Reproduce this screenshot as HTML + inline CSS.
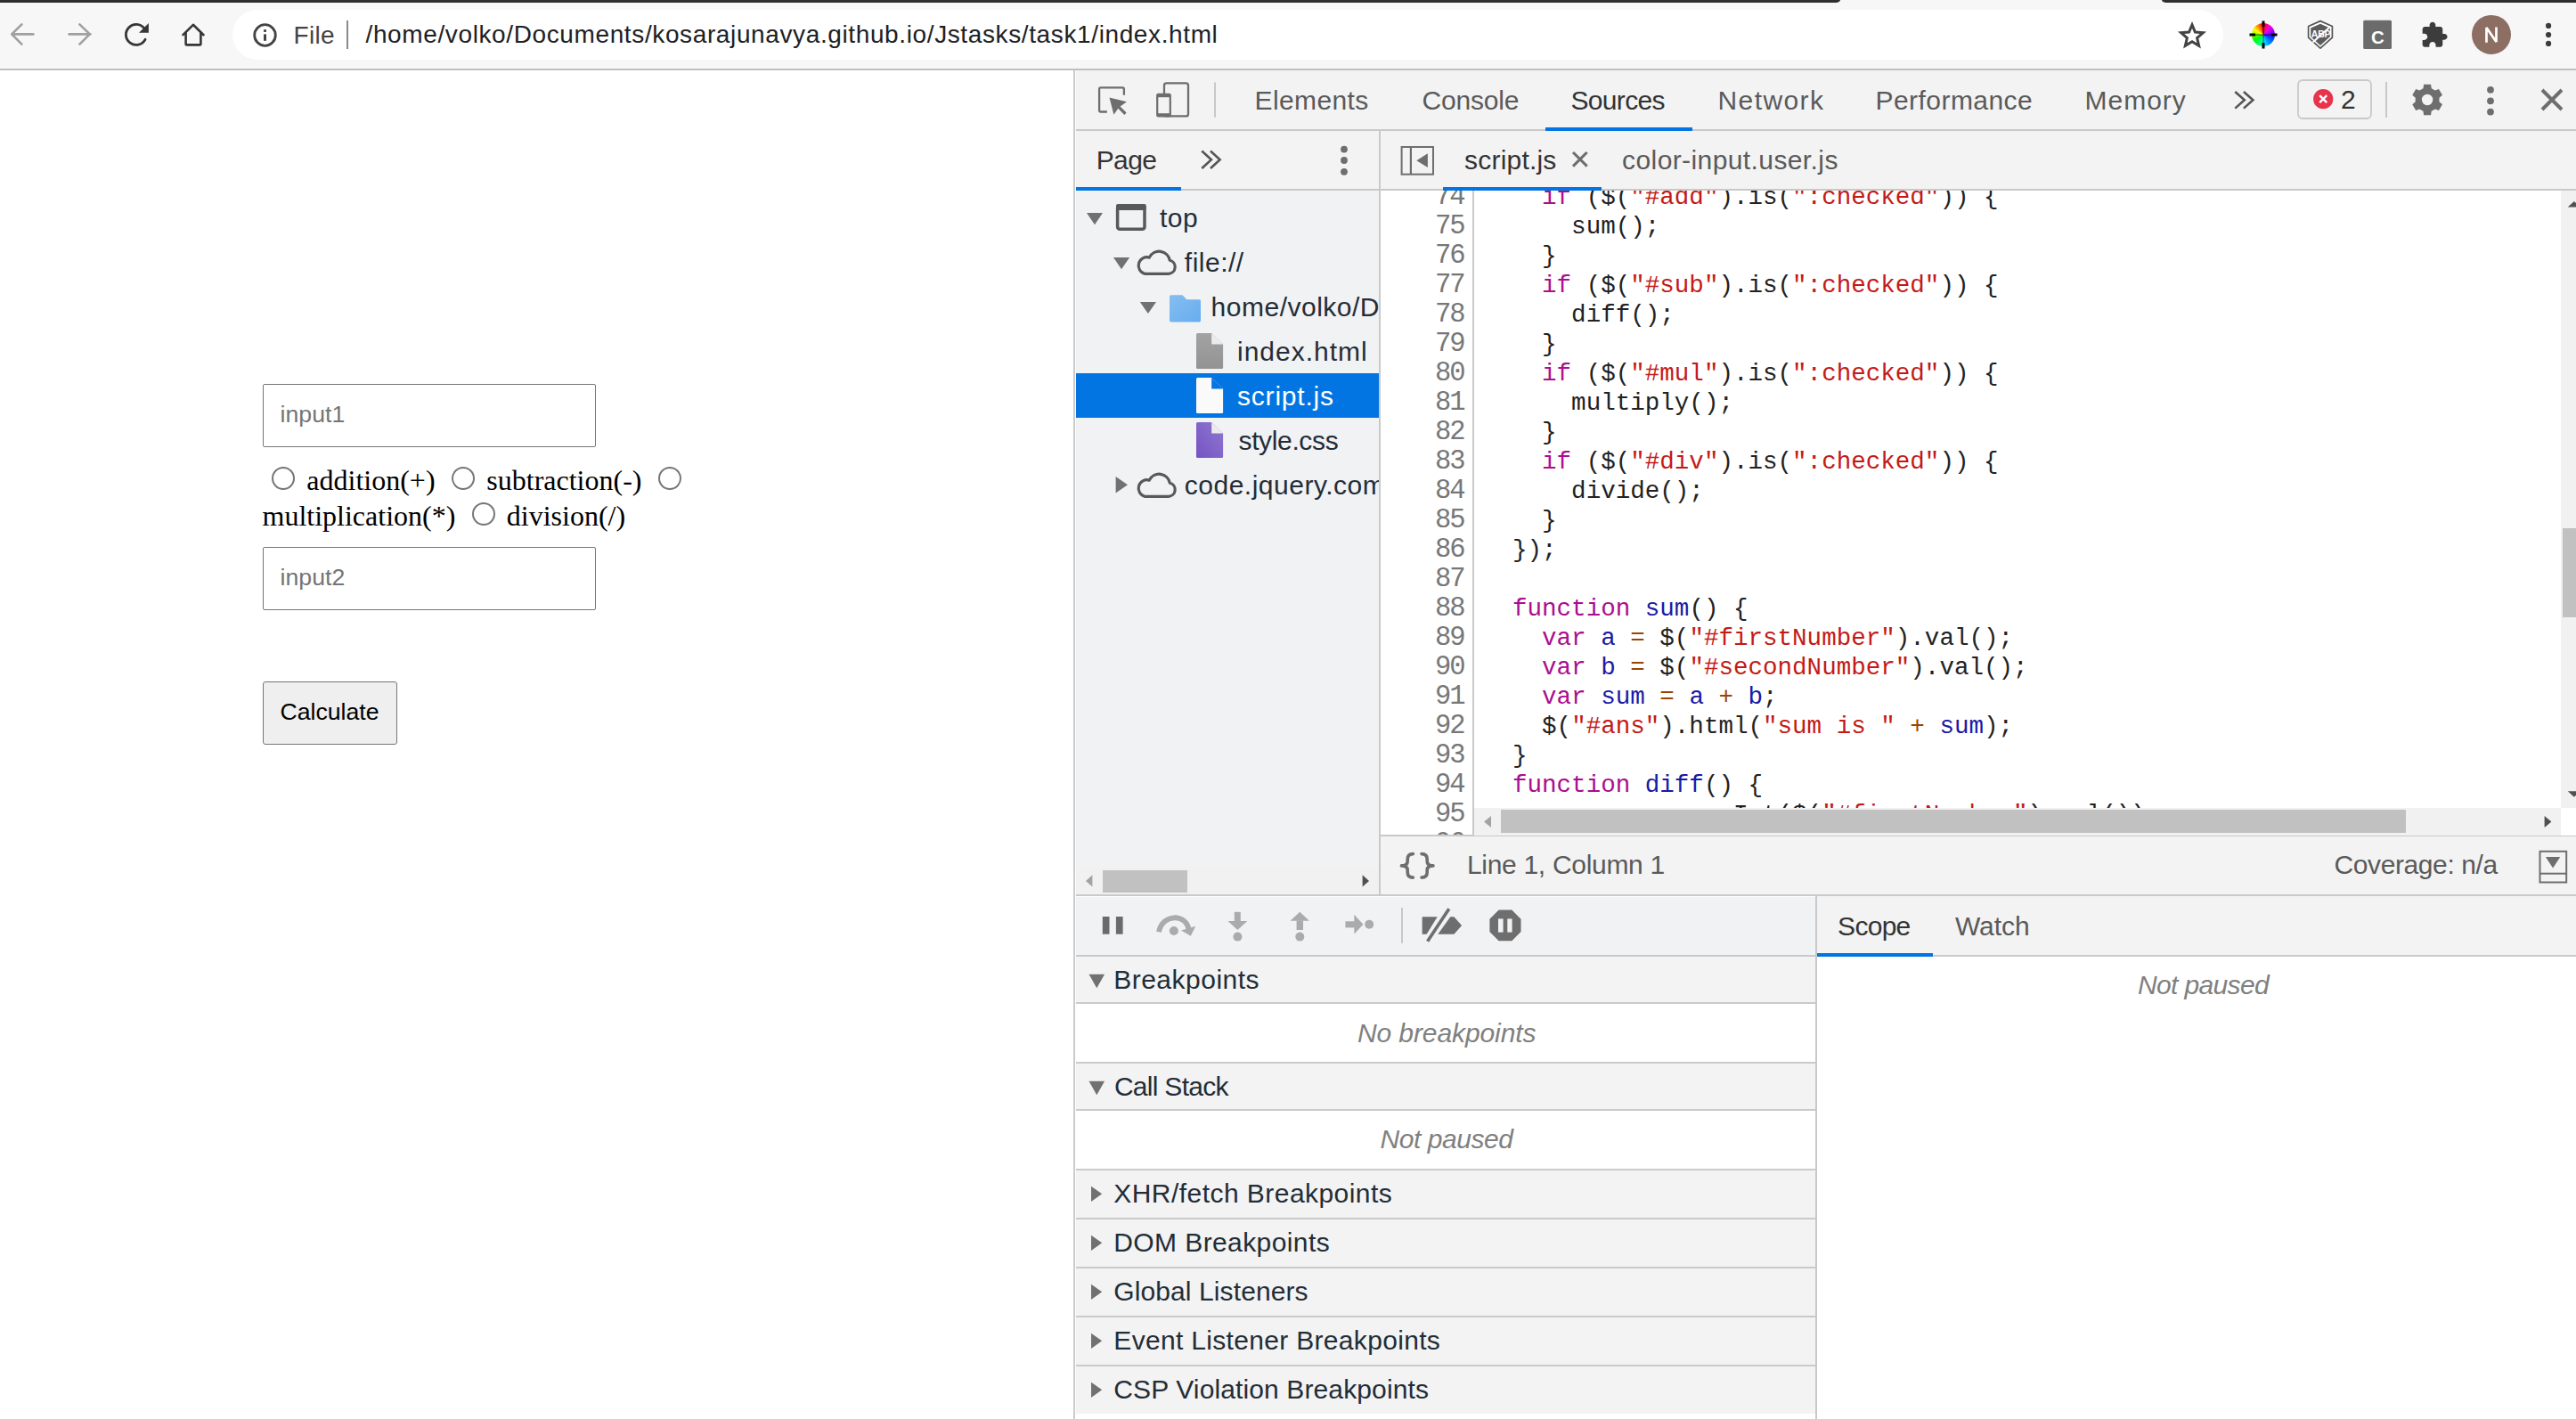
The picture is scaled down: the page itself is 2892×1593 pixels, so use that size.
<!DOCTYPE html>
<html><head><meta charset="utf-8">
<style>
html,body{margin:0;padding:0;}
body{width:2892px;height:1593px;position:relative;overflow:hidden;background:#fff;font-family:"Liberation Sans",sans-serif;}
.a{position:absolute;}
.t{position:absolute;white-space:pre;line-height:1;}
svg{position:absolute;overflow:visible;}
.code{position:absolute;font-family:"Liberation Mono",monospace;font-size:27.55px;line-height:33px;white-space:pre;color:#222;}
.kw{color:#aa0d91}.st{color:#c41a16}.df{color:#1a1aa6}.op{color:#994500}
.ln{position:absolute;font-family:"Liberation Mono",monospace;font-size:30.5px;letter-spacing:-1.85px;line-height:33px;white-space:pre;color:#777;text-align:right;}
</style></head>
<body>

<div class="a" style="left:2060px;top:0px;width:372px;height:3px;background:#f7f7f7;"></div>
<div class="a" style="left:0px;top:0px;width:2066px;height:3px;background:#2e2e2e;border-bottom-right-radius:5px 3px"></div>
<div class="a" style="left:2427px;top:0px;width:465px;height:3px;background:#2e2e2e;border-bottom-left-radius:5px 3px"></div>
<div class="a" style="left:0px;top:3px;width:2892px;height:74px;background:#f7f7f7;"></div>
<div class="a" style="left:0px;top:77px;width:2892px;height:2px;background:#bfbfbf;"></div>
<div class="a" style="left:261px;top:11px;width:2235px;height:56px;background:#fff;border-radius:28px"></div>
<div class="a" style="left:1205px;top:79px;width:2px;height:1514px;background:#cbcbcb;"></div>
<div class="a" style="left:1207px;top:79px;width:1685px;height:66px;background:#f3f3f3;"></div>
<div class="a" style="left:1207px;top:145px;width:1685px;height:2px;background:#c9c9c9;"></div>
<div class="a" style="left:1207px;top:147px;width:341px;height:65px;background:#f3f3f3;"></div>
<div class="a" style="left:1207px;top:214px;width:341px;height:790px;background:#f1f2f4;"></div>
<div class="a" style="left:1550px;top:147px;width:1342px;height:65px;background:#f3f3f3;"></div>
<div class="a" style="left:1207px;top:212px;width:1685px;height:2px;background:#c9c9c9;"></div>
<div class="a" style="left:1548px;top:147px;width:2px;height:857px;background:#c9c9c9;"></div>
<div class="a" style="left:1550px;top:214px;width:1342px;height:724px;background:#fff;"></div>
<div class="a" style="left:1653px;top:214px;width:2px;height:724px;background:#c9c9c9;"></div>
<div class="a" style="left:1550px;top:937px;width:1342px;height:2px;background:#c9c9c9;"></div>
<div class="a" style="left:1550px;top:939px;width:1342px;height:65px;background:#f3f3f3;"></div>
<div class="a" style="left:1207px;top:1004px;width:1685px;height:2px;background:#c9c9c9;"></div>
<div class="a" style="left:1207px;top:1006px;width:831px;height:1px;background:#fff;"></div>
<div class="a" style="left:1207px;top:1007px;width:831px;height:65px;background:#f1f2f4;"></div>
<div class="a" style="left:1207px;top:1072px;width:831px;height:2px;background:#c9c9c9;"></div>
<div class="a" style="left:2038px;top:1006px;width:2px;height:587px;background:#c9c9c9;"></div>
<div class="a" style="left:2040px;top:1006px;width:852px;height:66px;background:#f3f3f3;"></div>
<div class="a" style="left:2040px;top:1072px;width:852px;height:2px;background:#c9c9c9;"></div>
<div class="a" style="left:1207px;top:1074px;width:831px;height:51px;background:#f3f3f3;"></div>
<div class="a" style="left:1207px;top:1125px;width:831px;height:2px;background:#cacaca;"></div>
<div class="a" style="left:1207px;top:1192px;width:831px;height:2px;background:#cacaca;"></div>
<div class="a" style="left:1207px;top:1194px;width:831px;height:51px;background:#f3f3f3;"></div>
<div class="a" style="left:1207px;top:1245px;width:831px;height:2px;background:#cacaca;"></div>
<div class="a" style="left:1207px;top:1312px;width:831px;height:2px;background:#cacaca;"></div>
<div class="a" style="left:1207px;top:1314px;width:831px;height:53px;background:#f3f3f3;"></div>
<div class="a" style="left:1207px;top:1367px;width:831px;height:2px;background:#cacaca;"></div>
<div class="a" style="left:1207px;top:1369px;width:831px;height:53px;background:#f3f3f3;"></div>
<div class="a" style="left:1207px;top:1422px;width:831px;height:2px;background:#cacaca;"></div>
<div class="a" style="left:1207px;top:1424px;width:831px;height:53px;background:#f3f3f3;"></div>
<div class="a" style="left:1207px;top:1477px;width:831px;height:2px;background:#cacaca;"></div>
<div class="a" style="left:1207px;top:1479px;width:831px;height:53px;background:#f3f3f3;"></div>
<div class="a" style="left:1207px;top:1532px;width:831px;height:2px;background:#cacaca;"></div>
<div class="a" style="left:1207px;top:1534px;width:831px;height:53px;background:#f3f3f3;"></div>
<div class="a" style="left:1735px;top:143px;width:165px;height:4px;background:#0375e2;"></div>
<div class="a" style="left:1207px;top:210px;width:119px;height:4px;background:#0375e2;"></div>
<div class="a" style="left:1620px;top:210px;width:178px;height:4px;background:#0375e2;"></div>
<div class="a" style="left:2040px;top:1070px;width:130px;height:4px;background:#0375e2;"></div>
<div class="a" style="left:1207px;top:419px;width:341px;height:50px;background:#0375e2;"></div>
<div class="t" style="left:329.5px;top:25.7px;font-family:'Liberation Sans',sans-serif;font-size:28px;color:#444;letter-spacing:0.3px;">File</div>
<div class="t" style="left:410.5px;top:25.3px;font-family:'Liberation Sans',sans-serif;font-size:28px;color:#202124;letter-spacing:0.62px;">/home/volko/Documents/kosarajunavya.github.io/Jstasks/task1/index.html</div>
<div class="t" style="left:1408.5px;top:97.6px;font-family:'Liberation Sans',sans-serif;font-size:30px;color:#5a5a5a;letter-spacing:0.4px;">Elements</div>
<div class="t" style="left:1596.5px;top:97.6px;font-family:'Liberation Sans',sans-serif;font-size:30px;color:#5a5a5a;letter-spacing:-0.18px;">Console</div>
<div class="t" style="left:1763.5px;top:97.6px;font-family:'Liberation Sans',sans-serif;font-size:30px;color:#333;letter-spacing:-0.67px;">Sources</div>
<div class="t" style="left:1928.5px;top:97.6px;font-family:'Liberation Sans',sans-serif;font-size:30px;color:#5a5a5a;letter-spacing:1.4px;">Network</div>
<div class="t" style="left:2105.5px;top:97.6px;font-family:'Liberation Sans',sans-serif;font-size:30px;color:#5a5a5a;letter-spacing:0.45px;">Performance</div>
<div class="t" style="left:2340.5px;top:97.6px;font-family:'Liberation Sans',sans-serif;font-size:30px;color:#5a5a5a;letter-spacing:1.0px;">Memory</div>
<div class="t" style="left:2628.1px;top:96.6px;font-family:'Liberation Sans',sans-serif;font-size:30px;color:#333;">2</div>
<div class="t" style="left:1230.7px;top:165.1px;font-family:'Liberation Sans',sans-serif;font-size:30px;color:#333;letter-spacing:-0.6px;">Page</div>
<div class="t" style="left:1644.1px;top:165.1px;font-family:'Liberation Sans',sans-serif;font-size:30px;color:#333;letter-spacing:0.19px;">script.js</div>
<div class="t" style="left:1821.1px;top:165.1px;font-family:'Liberation Sans',sans-serif;font-size:30px;color:#5a5a5a;letter-spacing:0.4px;">color-input.user.js</div>
<div class="a" style="left:1207px;top:214px;width:341px;height:759px;overflow:hidden"><div class="a" style="left:-1207px;top:-214px;width:2892px;height:1593px">
<div class="t" style="left:1301.9px;top:230.2px;font-family:'Liberation Sans',sans-serif;font-size:30px;color:#232d37;letter-spacing:0.5px;">top</div>
<div class="t" style="left:1329.8px;top:280.2px;font-family:'Liberation Sans',sans-serif;font-size:30px;color:#232d37;letter-spacing:0.5px;">file://</div>
<div class="t" style="left:1359.6px;top:330.2px;font-family:'Liberation Sans',sans-serif;font-size:30px;color:#232d37;letter-spacing:0.5px;">home/volko/Documents</div>
<div class="t" style="left:1389.0px;top:380.2px;font-family:'Liberation Sans',sans-serif;font-size:30px;color:#232d37;letter-spacing:1.0px;">index.html</div>
<div class="t" style="left:1389.0px;top:430.2px;font-family:'Liberation Sans',sans-serif;font-size:30px;color:#fff;letter-spacing:0.8px;">script.js</div>
<div class="t" style="left:1390.5px;top:480.2px;font-family:'Liberation Sans',sans-serif;font-size:30px;color:#232d37;letter-spacing:-0.36px;">style.css</div>
<div class="t" style="left:1329.8px;top:530.2px;font-family:'Liberation Sans',sans-serif;font-size:30px;color:#232d37;letter-spacing:0.5px;">code.jquery.com</div>
</div></div>
<div class="t" style="left:1646.9px;top:956.1px;font-family:'Liberation Sans',sans-serif;font-size:30px;color:#5a5a5a;letter-spacing:-0.3px;">Line 1, Column 1</div>
<div class="t" style="left:2620.5px;top:956.4px;font-family:'Liberation Sans',sans-serif;font-size:30px;color:#5a5a5a;letter-spacing:-0.4px;">Coverage: n/a</div>
<div class="t" style="left:1250.2px;top:1085.3px;font-family:'Liberation Sans',sans-serif;font-size:30px;color:#232d37;letter-spacing:0.5px;">Breakpoints</div>
<div class="t" style="left:1523.9px;top:1144.6px;font-family:'Liberation Sans',sans-serif;font-size:30px;color:#808080;letter-spacing:-0.09px;font-style:italic;">No breakpoints</div>
<div class="t" style="left:1250.9px;top:1205.1px;font-family:'Liberation Sans',sans-serif;font-size:30px;color:#232d37;letter-spacing:-0.71px;">Call Stack</div>
<div class="t" style="left:1549.5px;top:1263.6px;font-family:'Liberation Sans',sans-serif;font-size:30px;color:#808080;letter-spacing:-0.45px;font-style:italic;">Not paused</div>
<div class="t" style="left:1250.3px;top:1325.3px;font-family:'Liberation Sans',sans-serif;font-size:30px;color:#232d37;letter-spacing:0.45px;">XHR/fetch Breakpoints</div>
<div class="t" style="left:1250.3px;top:1380.3px;font-family:'Liberation Sans',sans-serif;font-size:30px;color:#232d37;letter-spacing:0.4px;">DOM Breakpoints</div>
<div class="t" style="left:1250.3px;top:1435.3px;font-family:'Liberation Sans',sans-serif;font-size:30px;color:#232d37;letter-spacing:0.1px;">Global Listeners</div>
<div class="t" style="left:1250.3px;top:1490.3px;font-family:'Liberation Sans',sans-serif;font-size:30px;color:#232d37;letter-spacing:0.32px;">Event Listener Breakpoints</div>
<div class="t" style="left:1250.3px;top:1545.0px;font-family:'Liberation Sans',sans-serif;font-size:30px;color:#232d37;letter-spacing:0.12px;">CSP Violation Breakpoints</div>
<div class="t" style="left:2063.1px;top:1024.6px;font-family:'Liberation Sans',sans-serif;font-size:30px;color:#333;letter-spacing:-0.72px;">Scope</div>
<div class="t" style="left:2194.9px;top:1024.6px;font-family:'Liberation Sans',sans-serif;font-size:30px;color:#5a5a5a;">Watch</div>
<div class="t" style="left:2399.9px;top:1091.1px;font-family:'Liberation Sans',sans-serif;font-size:30px;color:#808080;letter-spacing:-0.63px;font-style:italic;">Not paused</div>
<div class="a" style="left:295px;top:431px;width:374px;height:71px;background:#fff;box-sizing:border-box;border:1px solid #767676;border-radius:2px"></div>
<div class="t" style="left:314.6px;top:452.1px;font-family:'Liberation Sans',sans-serif;font-size:26.67px;color:#757575;">input1</div>
<div class="a" style="left:295px;top:614px;width:374px;height:71px;background:#fff;box-sizing:border-box;border:1px solid #767676;border-radius:2px"></div>
<div class="t" style="left:314.6px;top:635.1px;font-family:'Liberation Sans',sans-serif;font-size:26.67px;color:#757575;">input2</div>
<div class="a" style="left:305px;top:524px;width:26px;height:26px;box-sizing:border-box;border:2px solid #767676;border-radius:50%;background:#fff"></div>
<div class="a" style="left:507px;top:524px;width:26px;height:26px;box-sizing:border-box;border:2px solid #767676;border-radius:50%;background:#fff"></div>
<div class="a" style="left:738.5px;top:524px;width:26px;height:26px;box-sizing:border-box;border:2px solid #767676;border-radius:50%;background:#fff"></div>
<div class="a" style="left:530px;top:564px;width:26px;height:26px;box-sizing:border-box;border:2px solid #767676;border-radius:50%;background:#fff"></div>
<div class="t" style="left:344.3px;top:523.2px;font-family:'Liberation Serif',serif;font-size:32px;color:#000;">addition(+)</div>
<div class="t" style="left:546.3px;top:523.2px;font-family:'Liberation Serif',serif;font-size:32px;color:#000;">subtraction(-)</div>
<div class="t" style="left:294.5px;top:563.2px;font-family:'Liberation Serif',serif;font-size:32px;color:#000;">multiplication(*)</div>
<div class="t" style="left:568.8px;top:563.2px;font-family:'Liberation Serif',serif;font-size:32px;color:#000;">division(/)</div>
<div class="a" style="left:295px;top:765px;width:151px;height:71px;background:#efefef;box-sizing:border-box;border:1px solid #767676;border-radius:3px"></div>
<div class="t" style="left:314.4px;top:785.9px;font-family:'Liberation Sans',sans-serif;font-size:26.67px;color:#000;">Calculate</div>
<div class="a" style="left:1550px;top:214px;width:1325px;height:723px;overflow:hidden">
<div class="code" style="left:148px;top:-9.2px">  <span class="kw">if</span> ($(<span class="st">&quot;#add&quot;</span>).is(<span class="st">&quot;:checked&quot;</span>)) {
    sum();
  }
  <span class="kw">if</span> ($(<span class="st">&quot;#sub&quot;</span>).is(<span class="st">&quot;:checked&quot;</span>)) {
    diff();
  }
  <span class="kw">if</span> ($(<span class="st">&quot;#mul&quot;</span>).is(<span class="st">&quot;:checked&quot;</span>)) {
    multiply();
  }
  <span class="kw">if</span> ($(<span class="st">&quot;#div&quot;</span>).is(<span class="st">&quot;:checked&quot;</span>)) {
    divide();
  }
});

<span class="kw">function</span> <span class="df">sum</span>() {
  <span class="kw">var</span> <span class="df">a</span> <span class="op">=</span> $(<span class="st">&quot;#firstNumber&quot;</span>).val();
  <span class="kw">var</span> <span class="df">b</span> <span class="op">=</span> $(<span class="st">&quot;#secondNumber&quot;</span>).val();
  <span class="kw">var</span> <span class="df">sum</span> <span class="op">=</span> <span class="df">a</span> <span class="op">+</span> <span class="df">b</span>;
  $(<span class="st">&quot;#ans&quot;</span>).html(<span class="st">&quot;sum is &quot;</span> <span class="op">+</span> <span class="df">sum</span>);
}
<span class="kw">function</span> <span class="df">diff</span>() {
  <span class="kw">var</span> <span class="df">a</span> <span class="op">=</span> parseInt($(<span class="st">&quot;#firstNumber&quot;</span>).val());
  <span class="kw">var</span> <span class="df">b</span> <span class="op">=</span> parseInt($(<span class="st">&quot;#secondNumber&quot;</span>).val());</div>
</div>
<div class="a" style="left:1550px;top:214px;width:103px;height:723px;overflow:hidden"><div class="ln" style="left:0px;top:-9.2px;width:93.8px">74
75
76
77
78
79
80
81
82
83
84
85
86
87
88
89
90
91
92
93
94
95
96</div></div>
<div class="a" style="left:1653px;top:214px;width:2px;height:724px;background:#c9c9c9;"></div>
<div class="a" style="left:1655px;top:907px;width:1220px;height:31px;background:#f1f1f1;"></div>
<div class="a" style="left:1685px;top:909px;width:1016px;height:26px;background:#c1c1c1;"></div>
<div class="a" style="left:2875px;top:907px;width:17px;height:31px;background:#fff;"></div>
<div class="a" style="left:2875px;top:214px;width:17px;height:693px;background:#f1f1f1;"></div>
<div class="a" style="left:2877px;top:593px;width:15px;height:100px;background:#c1c1c1;"></div>
<div class="a" style="left:1207px;top:973px;width:341px;height:31px;background:#f1f1f1;"></div>
<div class="a" style="left:1238px;top:977px;width:95px;height:25px;background:#c1c1c1;"></div>

<svg class="a" style="left:0;top:0" width="2892" height="1593" viewBox="0 0 2892 1593" ><g fill="none" stroke="#a0a0a0" stroke-width="2.7" stroke-linecap="round" stroke-linejoin="round"><path d="M37.4 38.4H13.4M24.4 27.4L13.2 38.4L24.4 49.6"/><path d="M77.6 38.4H101.4M89.4 27.4L100.8 38.4L89.4 49.6"/></g><path d="M161.96 31.82A11.5 11.5 0 1 0 163.05 44.30" fill="none" stroke="#363636" stroke-width="2.8" stroke-linecap="round"/><path d="M156 36.8L166.9 36.8L166.9 26Z" fill="#363636"/><g fill="none" stroke="#363636" stroke-width="2.6" stroke-linecap="round" stroke-linejoin="round"><path d="M205.5 39.2L216.9 27.8L228.5 39.2"/><path d="M208.6 37V49.4Q208.6 50.4 209.6 50.4H224.4Q225.4 50.4 225.4 49.4V37"/></g><circle cx="297.5" cy="39.5" r="11.8" fill="none" stroke="#444" stroke-width="2.8"/><rect x="296" y="33.2" width="3" height="2.7" fill="#444"/><rect x="296" y="38.4" width="3" height="7.4" fill="#444"/><rect x="389" y="23" width="2" height="32" fill="#8a8a8a"/><polygon points="2461.00,27.80 2464.47,36.03 2473.36,36.78 2466.61,42.62 2468.64,51.32 2461.00,46.70 2453.36,51.32 2455.39,42.62 2448.64,36.78 2457.53,36.03" fill="none" stroke="#444" stroke-width="3.0" stroke-linejoin="miter"/><path d="M2605 23.6L2618.4 29.5V42.2L2605 54.2L2591.6 42.2V29.5Z" fill="#fff" stroke="#555" stroke-width="1.7" stroke-linejoin="round"/><path d="M2605 26.8L2615.8 31.4V41.3L2605 50.9L2594.2 41.3V31.4Z" fill="#5c5c5c"/><text x="2605.5" y="42.3" font-family="Liberation Sans" font-size="10.5" font-weight="bold" fill="#fff" text-anchor="middle" letter-spacing="-0.3">ABP</text><path d="M2596.5 47.5L2616 30" stroke="#fff" stroke-width="2"/><rect x="2653.2" y="22.7" width="31.8" height="32.3" rx="1.5" fill="#6b6b6b"/><text x="2669.5" y="49" font-family="Liberation Sans" font-size="20.5" font-weight="bold" fill="#fff" text-anchor="middle">C</text><g transform="translate(2717,23.4) scale(1.33)"><path fill="#3c3c3c" d="M20.5 11H19V7c0-1.1-.9-2-2-2h-4V3.5C13 2.12 11.88 1 10.5 1S8 2.12 8 3.5V5H4c-1.1 0-1.99.9-1.99 2v3.8H3.5c1.49 0 2.7 1.21 2.7 2.7s-1.21 2.7-2.7 2.7H2V20c0 1.1.9 2 2 2h3.8v-1.5c0-1.49 1.21-2.7 2.7-2.7 1.49 0 2.7 1.21 2.7 2.7V22H17c1.1 0 2-.9 2-2v-4h1.5c1.38 0 2.5-1.12 2.5-2.5S21.88 11 20.5 11z"/></g><circle cx="2797" cy="38.9" r="22" fill="#8d6e63"/><path d="M2791.5 47.7V31L2802.5 47V30.5" fill="none" stroke="#fff" stroke-width="2.7" stroke-linejoin="bevel"/><circle cx="2861.1" cy="28.9" r="3.1" fill="#3c3c3c"/><circle cx="2861.1" cy="39.1" r="3.1" fill="#3c3c3c"/><circle cx="2861.1" cy="48.9" r="3.1" fill="#3c3c3c"/><path d="M1242.9 125.5H1235.8Q1234.1 125.5 1234.1 123.8V100Q1234.1 98.3 1235.8 98.3H1260.2Q1261.9 98.3 1261.9 100V106.7" fill="none" stroke="#6e6e6e" stroke-width="2.3"/><path d="M1245.5 109.5L1265 114.3L1257.6 119.5L1264.6 126.6L1262.3 128.9L1255.3 121.8L1250.4 128.8Z" fill="#6e6e6e"/><rect x="1307" y="93.4" width="27" height="37" rx="2.5" fill="none" stroke="#6e6e6e" stroke-width="2.3"/><rect x="1298.1" y="104.8" width="16.8" height="26.8" rx="2.5" fill="#6e6e6e"/><rect x="1300.3" y="109.2" width="12.4" height="18" fill="#f3f3f3"/><rect x="1363" y="92.5" width="2" height="39.3" fill="#c8c8c8"/><path d="M2509.3 103.0L2519.8 112.3L2509.3 121.6M2518.9 103.0L2529.4 112.3L2518.9 121.6" fill="none" stroke="#555" stroke-width="2.6"/><rect x="2580" y="90" width="82" height="43" rx="5" fill="none" stroke="#c9c9c9" stroke-width="1.8"/><circle cx="2608.2" cy="111.2" r="11.1" fill="#e8334a"/><path d="M2604.2 107.2L2612.2 115.2M2612.2 107.2L2604.2 115.2" stroke="#fff" stroke-width="2.4"/><rect x="2678" y="92" width="2" height="40" fill="#c8c8c8"/><path d="M2720.45 99.22 L2721.14 94.85 L2729.06 94.85 L2729.75 99.22 L2733.84 101.58 L2737.97 100.00 L2741.93 106.85 L2738.49 109.64 L2738.49 114.36 L2741.93 117.15 L2737.97 124.00 L2733.84 122.42 L2729.75 124.78 L2729.06 129.15 L2721.14 129.15 L2720.45 124.78 L2716.36 122.42 L2712.23 124.00 L2708.27 117.15 L2711.71 114.36 L2711.71 109.64 L2708.27 106.85 L2712.23 100.00 L2716.36 101.58ZM2731.2999999999997 112A6.2 6.2 0 1 0 2718.9 112A6.2 6.2 0 1 0 2731.2999999999997 112Z" fill="#6e6e6e" fill-rule="evenodd"/><circle cx="2796" cy="100.8" r="3.9" fill="#6e6e6e"/><circle cx="2796" cy="113.3" r="3.9" fill="#6e6e6e"/><circle cx="2796" cy="125.6" r="3.9" fill="#6e6e6e"/><path d="M2854 101L2876 123M2876 101L2854 123" stroke="#6e6e6e" stroke-width="3.9"/><path d="M1349.3 169.5L1359.9 179.2L1349.3 189.0M1359.0 169.5L1369.6 179.2L1359.0 189.0" fill="none" stroke="#555" stroke-width="2.6"/><circle cx="1509" cy="167.6" r="3.9" fill="#6e6e6e"/><circle cx="1509" cy="180" r="3.9" fill="#6e6e6e"/><circle cx="1509" cy="192.8" r="3.9" fill="#6e6e6e"/><rect x="1573.6" y="165" width="35.4" height="30.7" fill="none" stroke="#6e6e6e" stroke-width="2"/><rect x="1582.8" y="165" width="2.2" height="31" fill="#6e6e6e"/><path d="M1590.3 180.2L1602.9 172.2V188.1Z" fill="#6e6e6e"/><path d="M1766 171L1781.7 186.6M1781.7 171L1766 186.6" stroke="#6e6e6e" stroke-width="3.1"/><path d="M1220 239H1238L1229.0 252.2Z" fill="#717171"/><path d="M1250 288.9H1268.1L1259.05 302.2Z" fill="#717171"/><path d="M1279.8 338.9H1298L1288.9 352.1Z" fill="#717171"/><path d="M1252.6 535V553.4L1266 544.2Z" fill="#717171"/><rect x="1254.6" y="230.8" width="30.4" height="26.4" rx="2.5" fill="none" stroke="#595959" stroke-width="3.5"/><rect x="1253" y="229" width="33.8" height="7" rx="2" fill="#595959"/><path transform="translate(1276.5,279.5)" d="M8.5 27.8H35.5A7.6 7.6 0 0 0 36.8 12.8A12.2 12.2 0 0 0 13.8 9.6A9.2 9.2 0 0 0 8.5 27.8Z" fill="none" stroke="#595959" stroke-width="3.2" stroke-linejoin="round"/><path transform="translate(1276.5,529.5)" d="M8.5 27.8H35.5A7.6 7.6 0 0 0 36.8 12.8A12.2 12.2 0 0 0 13.8 9.6A9.2 9.2 0 0 0 8.5 27.8Z" fill="none" stroke="#595959" stroke-width="3.2" stroke-linejoin="round"/><defs><linearGradient id="fg" x1="0" y1="0" x2="1" y2="1"><stop offset="0" stop-color="#86bdf2"/><stop offset="1" stop-color="#66adee"/></linearGradient><linearGradient id="gg" x1="0" y1="0" x2="0" y2="1"><stop offset="0" stop-color="#a3a3a3"/><stop offset="1" stop-color="#939393"/></linearGradient><linearGradient id="pg" x1="1" y1="0" x2="0" y2="1"><stop offset="0" stop-color="#8f78d0"/><stop offset="1" stop-color="#7553c4"/></linearGradient></defs><path d="M1314.5 331.2H1327.4L1332.4 336.3H1346.3Q1348 336.3 1348 338V359.7Q1348 361.4 1346.3 361.4H1314.7Q1313 361.4 1313 359.7V332.9Q1313 331.2 1314.5 331.2Z" fill="url(#fg)"/><path d="M1344.5 374H1360.2L1373.1 386.4V412.5Q1373.1 414 1371.6 414H1344.5Q1343 414 1343 412.5V375.5Q1343 374 1344.5 374Z" fill="url(#gg)"/><path d="M1360.2 374L1373.1 386.4H1360.2Z" fill="#ececec"/><path d="M1344.5 424H1360.2L1373.1 436.4V462.5Q1373.1 464 1371.6 464H1344.5Q1343 464 1343 462.5V425.5Q1343 424 1344.5 424Z" fill="#fafafa"/><path d="M1360.2 424L1373.1 436.4H1360.2Z" fill="#0375e2"/><path d="M1344.5 474H1360.2L1373.1 486.4V512.5Q1373.1 514 1371.6 514H1344.5Q1343 514 1343 512.5V475.5Q1343 474 1344.5 474Z" fill="url(#pg)"/><path d="M1360.2 474L1373.1 486.4H1360.2Z" fill="#ececec"/><g fill="none" stroke="#6e6e6e" stroke-width="3.6" stroke-linecap="round" stroke-linejoin="round"><path d="M1586.4 958.6C1582 958.6 1580.2 960.4 1580.2 964.5V967C1580.2 970.3 1578.3 971.9 1573.4 971.9C1578.3 971.9 1580.2 973.5 1580.2 976.8V979.3C1580.2 983.4 1582 985.1 1586.4 985.1"/><path d="M1596 958.6C1600.4 958.6 1602.2 960.4 1602.2 964.5V967C1602.2 970.3 1604.1 971.9 1609 971.9C1604.1 971.9 1602.2 973.5 1602.2 976.8V979.3C1602.2 983.4 1600.4 985.1 1596 985.1"/></g><rect x="2851.5" y="955.8" width="29.7" height="34.7" fill="none" stroke="#6e6e6e" stroke-width="2"/><rect x="2851.5" y="979.7" width="29.7" height="2" fill="#6e6e6e"/><path d="M2857.9 962H2874.3L2866.1 974.4Z" fill="#6e6e6e"/><path d="M1666 922.5L1674 916V929Z" fill="#a3a3a3"/><path d="M2864.4 922.5L2856.6 916V929Z" fill="#505050"/><path d="M2889.9 226.1L2882.8 232.6H2897Z" fill="#505050"/><path d="M2889.9 894.8L2882.8 888.2H2897Z" fill="#505050"/><path d="M1219 989L1226.4 982.3V995.6Z" fill="#a3a3a3"/><path d="M1537 989L1529.6 982.3V995.6Z" fill="#505050"/><rect x="1237.8" y="1029" width="7.7" height="19.7" fill="#6b6b6b"/><rect x="1252.9" y="1029" width="7.7" height="19.7" fill="#6b6b6b"/><path d="M1301 1046.2C1305 1025.5 1331 1025.5 1334.5 1043" fill="none" stroke="#ababab" stroke-width="5.8"/><path d="M1326 1044.5L1342.2 1039.7L1336.8 1050.8Z" fill="#ababab"/><circle cx="1317.9" cy="1045" r="5" fill="#ababab"/><rect x="1385.8" y="1023.8" width="7" height="10.5" fill="#ababab"/><path d="M1378.5 1034H1400.3L1389.4 1044Z" fill="#ababab"/><circle cx="1389.4" cy="1051.6" r="5" fill="#ababab"/><rect x="1455.6" y="1033.5" width="7.4" height="10.5" fill="#ababab"/><path d="M1448.5 1033.7H1469.9L1459.3 1023.8Z" fill="#ababab"/><circle cx="1459.3" cy="1051.6" r="5" fill="#ababab"/><rect x="1510.4" y="1034.3" width="10.5" height="7.1" fill="#ababab"/><path d="M1520.3 1026.7V1048.4L1530.5 1037.8Z" fill="#ababab"/><circle cx="1537.2" cy="1037.8" r="5" fill="#ababab"/><rect x="1573" y="1019" width="2" height="39.8" fill="#c8c8c8"/><path d="M1596.6 1029.3H1613.7L1601.6 1048.8H1596.6Z" fill="#6e6e6e"/><path d="M1628.3 1029.3H1632.4L1641.1 1038.9L1632.4 1048.8H1614.3Z" fill="#6e6e6e"/><path d="M1602.6 1056.8L1626.8 1020.3" stroke="#6e6e6e" stroke-width="3.6"/><path d="M1682.6 1021.5H1697.3L1707.5 1031.7V1046.1L1697.3 1056.3H1682.6L1672.4 1046.1V1031.7Z" fill="#6e6e6e"/><rect x="1682" y="1031.4" width="5.6" height="15.2" fill="#f1f2f4"/><rect x="1692.3" y="1031.4" width="5.3" height="15.2" fill="#f1f2f4"/><path d="M1222.5 1093.8H1240.1L1231.3 1109.3Z" fill="#717171"/><path d="M1222.5 1213.8H1240.1L1231.3 1229.3Z" fill="#717171"/><path d="M1225 1331.7V1349.0L1237.2 1340.35Z" fill="#717171"/><path d="M1225 1386.7V1404.0L1237.2 1395.35Z" fill="#717171"/><path d="M1225 1441.7V1459.0L1237.2 1450.35Z" fill="#717171"/><path d="M1225 1496.7V1514.0L1237.2 1505.35Z" fill="#717171"/><path d="M1225 1551.7V1569.0L1237.2 1560.35Z" fill="#717171"/></svg>
<div class="a" style="left:2527.8px;top:25.9px;width:26.4px;height:26.4px;border-radius:50%;background:conic-gradient(from 0deg,#ff0000,#ff00c0,#c000ff 60deg,#8000ff 80deg,#0040ff 110deg,#00a0ff 150deg,#00ffff 180deg,#00ff80 200deg,#00ff00 240deg,#80ff00 270deg,#ffff00 300deg,#ff8000 330deg,#ff0000)"></div>
<svg class="a" style="left:0;top:0" width="2892" height="1593" viewBox="0 0 2892 1593"><path d="M2541 26V52M2528 39.1H2554" stroke="#000" stroke-opacity="0.55" stroke-width="1.4"/><path d="M2541 23.5V30M2541 48V54.5M2525.5 39.1H2532M2550 39.1H2556.5" stroke="#000" stroke-width="3"/></svg>
<div class="a" style="left:1207px;top:79px;width:1px;height:1514px;background:#fff;"></div>
</body></html>
